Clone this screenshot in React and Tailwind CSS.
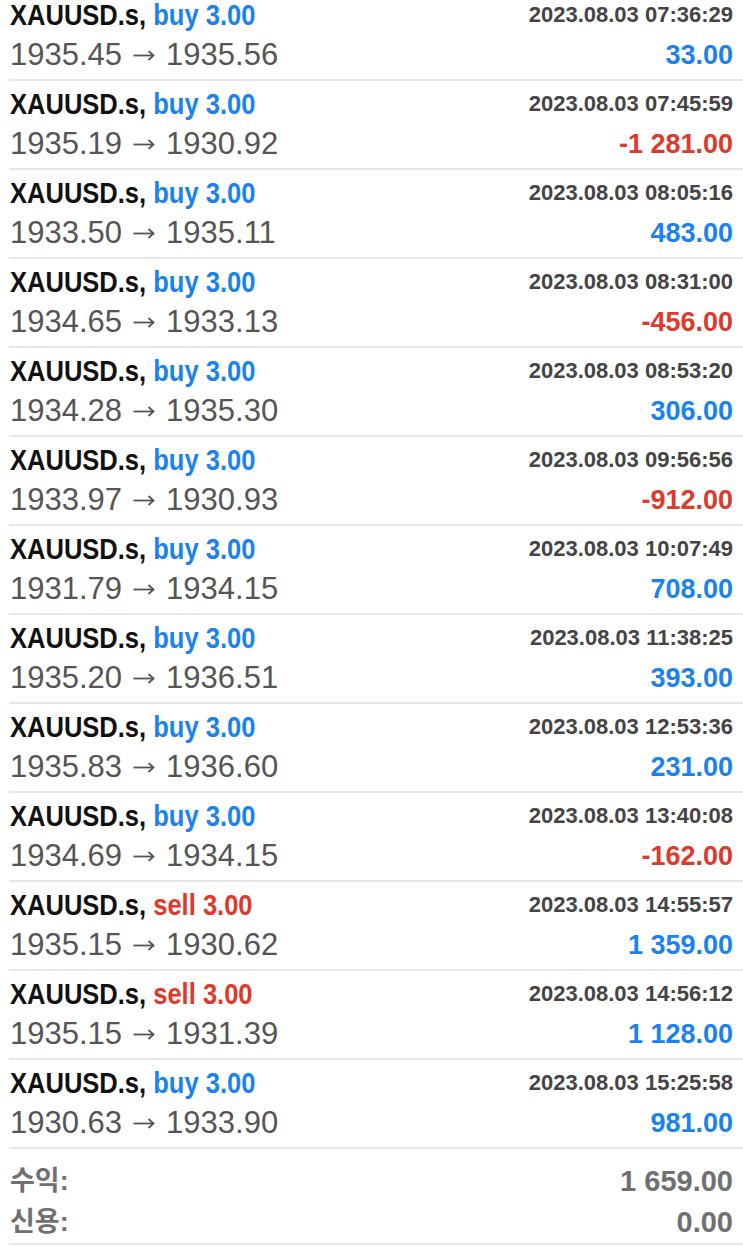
import React from "react";

const rows = [
  ["buy", "1935.45", "1935.56", "07:36:29", "33.00"],
  ["buy", "1935.19", "1930.92", "07:45:59", "-1 281.00"],
  ["buy", "1933.50", "1935.11", "08:05:16", "483.00"],
  ["buy", "1934.65", "1933.13", "08:31:00", "-456.00"],
  ["buy", "1934.28", "1935.30", "08:53:20", "306.00"],
  ["buy", "1933.97", "1930.93", "09:56:56", "-912.00"],
  ["buy", "1931.79", "1934.15", "10:07:49", "708.00"],
  ["buy", "1935.20", "1936.51", "11:38:25", "393.00"],
  ["buy", "1935.83", "1936.60", "12:53:36", "231.00"],
  ["buy", "1934.69", "1934.15", "13:40:08", "-162.00"],
  ["sell", "1935.15", "1930.62", "14:55:57", "1 359.00"],
  ["sell", "1935.15", "1931.39", "14:56:12", "1 128.00"],
  ["buy", "1930.63", "1933.90", "15:25:58", "981.00"],
];

function Arrow() {
  return (
    <svg width="22" height="12" viewBox="0 0 22 12" className="mx-[11px] shrink-0" aria-hidden="true">
      <path d="M0.5 6.5 H20" stroke="#555" strokeWidth="1.8" fill="none" />
      <path d="M15.5 2 L20.5 6.5 L15.5 11" stroke="#555" strokeWidth="1.8" fill="none" strokeLinejoin="miter" />
    </svg>
  );
}

function Row({ r }) {
  const [side, open, close, time, profit] = r;
  const neg = profit.startsWith("-");
  return (
    <div className="ml-[9px] border-b-2 border-[#e6e6e6] pt-[3px] pb-[4px] pr-[10px]">
      <div className="flex h-[40px] items-center justify-between pl-px">
        <span className="inline-block origin-left scale-x-[0.88] whitespace-nowrap text-[29px] font-bold leading-[40px]">
          <span className="text-[#111]">XAUUSD.s, </span>
          <span className={side === "buy" ? "text-[#1a82f0]" : "text-[#e0392b]"}>{side} 3.00</span>
        </span>
        <span className="whitespace-nowrap text-[22px] font-bold leading-[40px] text-[#444]">2023.08.03 {time}</span>
      </div>
      <div className="flex h-[40px] items-center justify-between pl-px">
        <span className="flex items-center whitespace-nowrap text-[31px] leading-[40px] text-[#555]">
          <span>{open}</span>
          <Arrow />
          <span>{close}</span>
        </span>
        <span className={"whitespace-nowrap text-[27px] font-bold leading-[40px] " + (neg ? "text-[#e0392b]" : "text-[#1a82f0]")}>
          {profit}
        </span>
      </div>
    </div>
  );
}

export default function App() {
  return (
    <div className="h-[1246px] w-[743px] overflow-hidden bg-white" style={{ fontFamily: '"Liberation Sans", "Noto Sans CJK KR", Arial, sans-serif' }}>
      <div className="-mt-[8px]">
        {rows.map((r, i) => (
          <Row key={i} r={r} />
        ))}
      </div>
      <div className="ml-[9px] border-b-2 border-[#e6e6e6] pt-[12px] pr-[10px] text-[#707070]">
        <div className="flex h-[40px] items-center justify-between pl-px">
          <span className="text-[27px] font-bold leading-[40px]">수익:</span>
          <span className="text-[29px] font-bold leading-[40px]">1 659.00</span>
        </div>
        <div className="flex h-[42px] items-center justify-between pl-px">
          <span className="text-[27px] font-bold leading-[42px]">신용:</span>
          <span className="text-[29px] font-bold leading-[42px]">0.00</span>
        </div>
      </div>
    </div>
  );
}
